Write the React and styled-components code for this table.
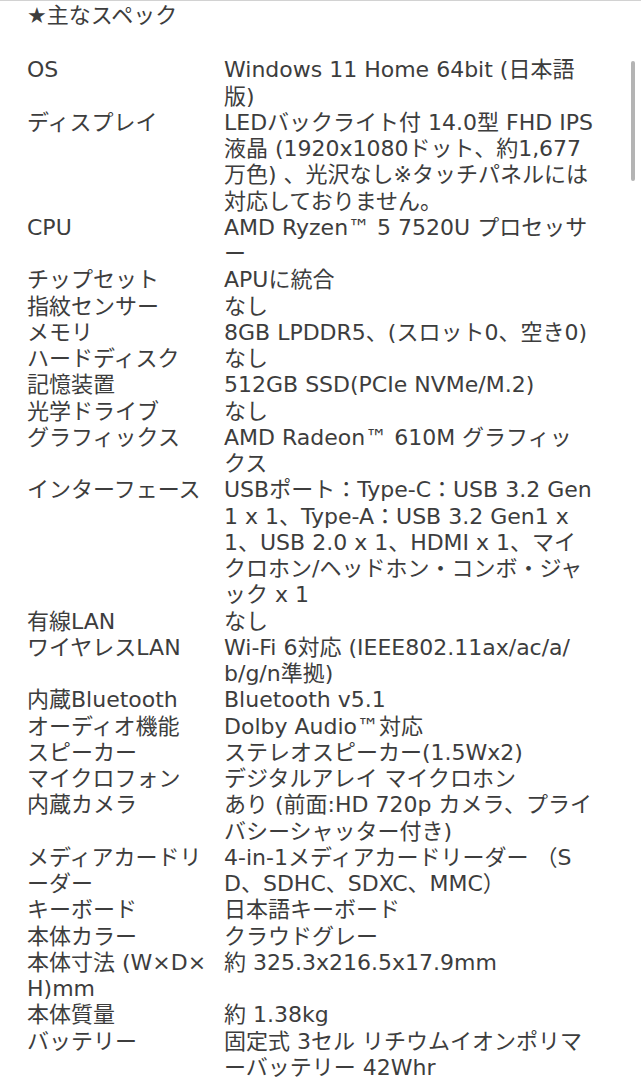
import React from "react";
import styled, { createGlobalStyle } from "styled-components";

const GlobalStyle = createGlobalStyle`
  html, body {
    margin: 0;
    padding: 0;
    background: #ffffff;
  }
  body {
    font-family: "DejaVu Sans", "Noto Sans CJK JP", sans-serif;
    color: #3d3d3d;
  }
`;

const Page = styled.div`
  position: relative;
  width: 641px;
  min-height: 1080px;
  box-sizing: border-box;
  border-top: 1px solid #d2d2d2;
  padding: 2px 0 0 27px;
  overflow: hidden;
`;

const Heading = styled.h2`
  margin: 0 0 28px;
  font-size: 22px;
  font-weight: 400;
  line-height: 26.25px;
  color: inherit;
`;

const SpecTable = styled.dl`
  margin: 0;
  display: grid;
  grid-template-columns: 197px 400px;
  font-size: 22px;
  line-height: 26.25px;
`;

const Label = styled.dt`
  margin: 0;
  white-space: pre-line;
`;

const Value = styled.dd`
  margin: 0;
  white-space: pre-line;
`;

const ScrollIndicator = styled.div`
  position: absolute;
  top: 60px;
  right: 6px;
  width: 4px;
  height: 120px;
  border-radius: 2px;
  background: #b4b4b4;
`;

const specs = [
  ["OS", "Windows 11 Home 64bit (日本語\n版)"],
  [
    "ディスプレイ",
    "LEDバックライト付 14.0型 FHD IPS\n液晶 (1920x1080ドット、約1,677\n万色) 、光沢なし※タッチパネルには\n対応しておりません。",
  ],
  ["CPU", "AMD Ryzen™ 5 7520U プロセッサ\nー"],
  ["チップセット", "APUに統合"],
  ["指紋センサー", "なし"],
  ["メモリ", "8GB LPDDR5、(スロット0、空き0)"],
  ["ハードディスク", "なし"],
  ["記憶装置", "512GB SSD(PCIe NVMe/M.2)"],
  ["光学ドライブ", "なし"],
  ["グラフィックス", "AMD Radeon™ 610M グラフィッ\nクス"],
  [
    "インターフェース",
    "USBポート：Type-C：USB 3.2 Gen\n1 x 1、Type-A：USB 3.2 Gen1 x\n1、USB 2.0 x 1、HDMI x 1、マイ\nクロホン/ヘッドホン・コンボ・ジャ\nック x 1",
  ],
  ["有線LAN", "なし"],
  ["ワイヤレスLAN", "Wi-Fi 6対応 (IEEE802.11ax/ac/a/\nb/g/n準拠)"],
  ["内蔵Bluetooth", "Bluetooth v5.1"],
  ["オーディオ機能", "Dolby Audio™対応"],
  ["スピーカー", "ステレオスピーカー(1.5Wx2)"],
  ["マイクロフォン", "デジタルアレイ マイクロホン"],
  ["内蔵カメラ", "あり (前面:HD 720p カメラ、プライ\nバシーシャッター付き)"],
  ["メディアカードリ\nーダー", "4-in-1メディアカードリーダー （S\nD、SDHC、SDXC、MMC）"],
  ["キーボード", "日本語キーボード"],
  ["本体カラー", "クラウドグレー"],
  ["本体寸法 (W×D×\nH)mm", "約 325.3x216.5x17.9mm"],
  ["本体質量", "約 1.38kg"],
  ["バッテリー", "固定式 3セル リチウムイオンポリマ\nーバッテリー 42Whr"],
];

export default function App() {
  return (
    <>
      <GlobalStyle />
      <Page>
        <Heading>★主なスペック</Heading>
        <SpecTable>
          {specs.map(([label, value]) => (
            <React.Fragment key={label}>
              <Label>{label}</Label>
              <Value>{value}</Value>
            </React.Fragment>
          ))}
        </SpecTable>
        <ScrollIndicator />
      </Page>
    </>
  );
}
